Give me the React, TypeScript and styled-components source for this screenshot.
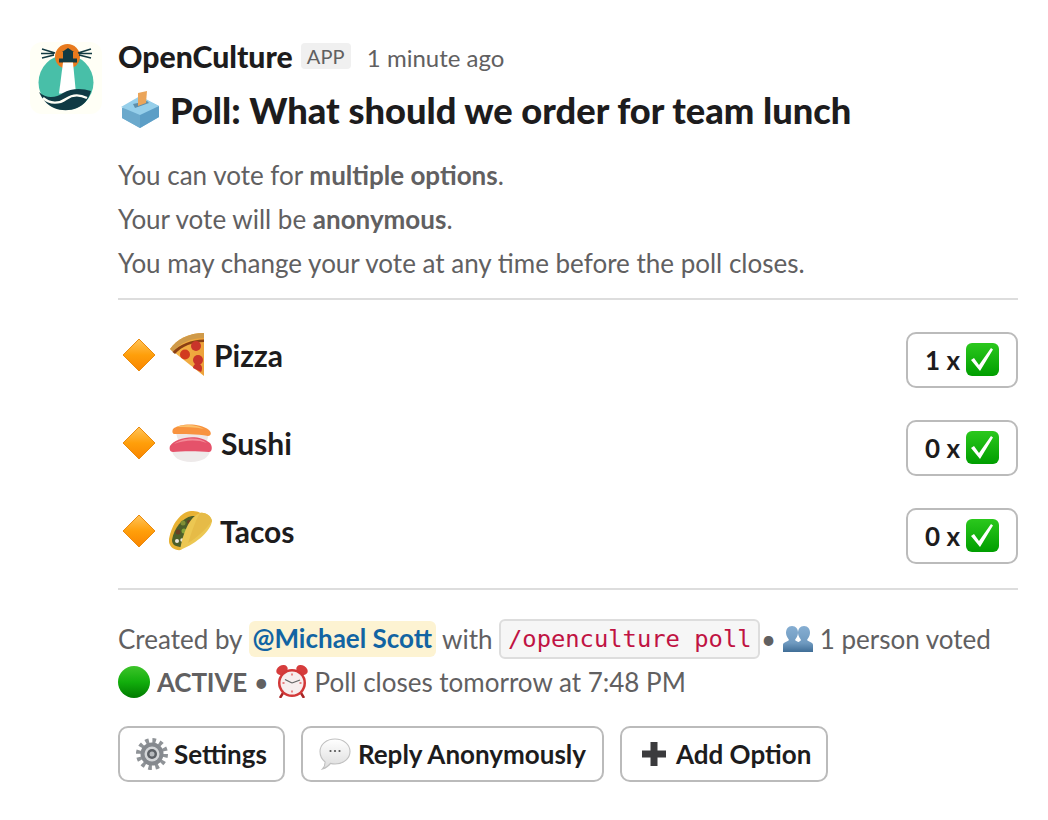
import React from "react";
import styled, { createGlobalStyle } from "styled-components";

const Global = createGlobalStyle`
  html, body { margin: 0; padding: 0; background: #fff; }
  body { font-family: Lato, "Noto Sans", sans-serif; color: #1d1c1d; }
`;

const Page = styled.div`
  display: flex;
  gap: 16px;
  width: 1048px;
  height: 820px;
  box-sizing: border-box;
  padding: 38px 30px 0 30px;
`;
const Avatar = styled.div`
  width: 72px;
  height: 72px;
  flex: none;
  margin-top: 4px;
  border-radius: 12px;
  background: #fffff6;
  display: flex;
`;
const Body = styled.div`
  width: 900px;
  display: flex;
  flex-direction: column;
`;
const Header = styled.div`
  display: flex;
  align-items: center;
  height: 36px;
`;
const Name = styled.span`
  font-size: 30.2px;
  font-weight: 900;
`;
const AppTag = styled.span`
  margin-left: 8px;
  padding: 0 6px;
  height: 26px;
  line-height: 26px;
  font-size: 20px;
  font-weight: 400;
  letter-spacing: 0.2px;
  color: #616061;
  background: #f0f0f0;
  border-radius: 4px;
`;
const Time = styled.span`
  margin-left: 16px;
  font-size: 24px;
  color: #616061;
  position: relative;
  top: 1px;
`;
const Title = styled.h1`
  display: flex;
  align-items: center;
  gap: 10px;
  margin: 14px 0 0 0;
  height: 44px;
  font-size: 36.25px;
  font-weight: 900;
  color: #1d1c1d;
`;
const TitleIcon = styled.span`
  display: flex;
  margin-left: 2px;
`;
const Intro = styled.div`
  margin-top: 21px;
  display: flex;
  flex-direction: column;
`;
const Line = styled.div`
  height: 44px;
  line-height: 44px;
  font-size: 26px;
  color: #616061;
  & b { font-weight: 700; }
`;
const Divider = styled.hr<{ $top: number }>`
  width: 100%;
  margin: ${(p) => p.$top}px 0 0 0;
  border: none;
  height: 2px;
  background: #dddddd;
`;
const Options = styled.div`
  margin-top: 32px;
  display: flex;
  flex-direction: column;
  gap: 32px;
`;
const Option = styled.div`
  display: flex;
  justify-content: space-between;
  align-items: center;
  height: 56px;
`;
const OptionLabel = styled.div`
  display: flex;
  align-items: center;
  font-size: 30px;
  font-weight: 700;
  position: relative;
  top: -5px;
  padding-left: 4px;
`;
const OptionIcon = styled.span`
  display: flex;
  margin-left: 13px;
  margin-right: 8px;
`;
const VoteButton = styled.div`
  box-sizing: border-box;
  width: 112px;
  height: 56px;
  border: 2px solid #bbbbbb;
  border-radius: 10px;
  display: flex;
  align-items: center;
  justify-content: center;
  gap: 6px;
  font-size: 26px;
  font-weight: 700;
  padding-bottom: 1px;
`;
const Context = styled.div`
  margin-top: 27px;
  display: flex;
  flex-direction: column;
`;
const ContextLine = styled.div`
  height: 43px;
  display: flex;
  align-items: center;
  font-size: 26px;
  color: #616061;
  white-space: pre;
  & b { font-weight: 700; letter-spacing: -0.15px; }
`;
const Mention = styled.span`
  background: #fdf3d2;
  color: #1264a3;
  font-weight: 700;
  border-radius: 6px;
  padding: 0 4px;
  margin: 0 6px 0 6px;
  height: 36px;
  line-height: 35px;
  box-sizing: border-box;
  display: inline-block;
  font-size: 26px;
`;
const Code = styled.code`
  font-family: "DejaVu Sans Mono", "Liberation Mono", monospace;
  font-size: 23.8px;
  color: #c01343;
  background: #f6f6f6;
  border: 2px solid #dddddd;
  border-radius: 6px;
  box-sizing: border-box;
  height: 40px;
  line-height: 36px;
  padding: 0 6.5px;
  margin: 0 1px 0 7px;
`;
const InlineIcon = styled.span`
  display: inline-flex;
  margin: 0 7px 0 0;
`;
const Actions = styled.div`
  margin-top: 23px;
  display: flex;
  gap: 16px;
`;
const ActionButton = styled.div`
  box-sizing: border-box;
  height: 56px;
  padding: 0 16px;
  border: 2px solid #bbbbbb;
  border-radius: 10px;
  display: flex;
  align-items: center;
  gap: 6px;
  font-size: 26px;
  font-weight: 700;
  color: #1d1c1d;
`;
const AddButton = styled(ActionButton)`
  padding: 0 15px 0 16px;
`;
const AddIcon = styled.span`
  display: flex;
  margin: 0 4px;
`;

const Logo = () => (
  <svg width="72" height="72" viewBox="0 0 72 72">
    <circle cx="36" cy="40.500" r="27.500" fill="#48bfa8" />
    <circle cx="37.500" cy="14.500" r="12.500" fill="#e87a1d" />
    <path d="M12 7l13 4M11 11.500h13M12 16l12-3M61 7l-13 4M62 11.500H49M61 16l-12-3" stroke="#123a42" strokeWidth="1.500" />
    <path d="M29 16.500h18v4H29z M33 10h10v6.500H33z M38 6l6 4H32z" fill="#123a42" />
    <path d="M33 20.500h10l3 31H29z" fill="#fff" />
    <path d="M9 50C16 57 26 56 33 51 41 46 52 46 61 49 59 57 54 63 47 66 40 69 31 69 24 66 17 63 12 57 9 50z" fill="#0f3a44" />
    <path d="M13 56C20 62 29 62 36 57 43 52 51 53 57 56" stroke="#fffff6" strokeWidth="2.400" fill="none" />
  </svg>
);
const Ballot = () => (
  <svg width="40" height="40" viewBox="0 0 40 40">
    <path d="M20 7l19 9v11L20 38 2 28V18z" fill="#7fb9da" />
    <path d="M20 21v17L2 28V18z" fill="#6ba9cc" />
    <path d="M20 21v17l19-11V16z" fill="#5c9ec6" />
    <path d="M20 6l19 10-19 9L1 17z" fill="#96cfea" />
    <path d="M13 14l14-3 2 2-14 5z" fill="#5f8ea8" />
    <path d="M18 3l9-2-1 12-8 3z" fill="#eba55a" />
  </svg>
);
const Diamond = () => (
  <svg width="34" height="34" viewBox="0 0 34 34">
    <defs>
      <linearGradient id="dm" x1="0" y1="0" x2="0" y2="1">
        <stop offset="0" stopColor="#ffc45a" />
        <stop offset="0.5" stopColor="#ff9f0a" />
        <stop offset="1" stopColor="#f98500" />
      </linearGradient>
    </defs>
    <path d="M17 1l16 16-16 16L1 17z" fill="url(#dm)" stroke="#e98a10" strokeWidth="1" strokeLinejoin="round" />
  </svg>
);
const Pizza = () => (
  <svg width="37" height="44" viewBox="0 0 37 44">
    <defs>
      <linearGradient id="pz" x1="0" y1="0" x2="1" y2="0">
        <stop offset="0" stopColor="#f4b548" />
        <stop offset="1" stopColor="#eda23a" />
      </linearGradient>
    </defs>
    <path d="M1 16C8 6 20 0 35 0v43z" fill="url(#pz)" />
    <path d="M1 16C8 6 20 0 35 0v5C22 5 11 10 4 19z" fill="#cf9a4a" />
    <path d="M3.500 19C11 11 22 7 35 6.500v2.500C24 9 13 13 6 21z" fill="#8a3f14" />
    <circle cx="27" cy="13" r="5" fill="#c9342a" />
    <circle cx="16" cy="21.500" r="5" fill="#d2391f" />
    <circle cx="29" cy="27" r="5" fill="#c9342a" />
    <path d="M24 35a4.500 4.500 0 0 1 9 0c0 2-.5 3-1 4z" fill="#c9342a" />
  </svg>
);
const Sushi = () => (
  <svg width="44" height="38" viewBox="0 0 44 38">
    <path d="M7 9h33l-2 8c-6 4-24 4-29-1z" fill="#efe6e4" />
    <path d="M4 5C12-1 30-1 40 6c3 3 2 6-1 6-11-2-25-2-33-2C3 10 3 7 4 5z" fill="#f8933f" />
    <path d="M7 3c8-3 20-3 28 2-9-2-19-2-28-2z" fill="#fbc26e" />
    <path d="M3 26h38c0 7-8 12-19 12S3 33 3 26z" fill="#eeeaea" />
    <path d="M1 22C6 13 30 9 41 19c3 4 2 9-1 9-10-1-28-1-36 0-3 0-4-3-3-6z" fill="#e5526a" />
    <path d="M5 20c8-6 24-8 33-1-10-4-23-3-33 1z" fill="#f28a97" />
  </svg>
);
const Taco = () => (
  <svg width="43" height="40" viewBox="0 0 43 40">
    <path d="M0 28C3 12 12 1 22 0c6 0 9 1 10 3L12 39C5 40-1 35 0 28z" fill="#e8b233" />
    <path d="M3 29C5 17 13 7 23 5l5 0-15 31C7 36 3 34 3 29z" fill="#4d5f2a" />
    <circle cx="14" cy="12" r="2.500" fill="#7f8f35" />
    <circle cx="9" cy="21" r="2.500" fill="#6a3f22" />
    <circle cx="15" cy="20" r="2.500" fill="#86a33a" />
    <circle cx="8" cy="30" r="2" fill="#ece8dc" />
    <circle cx="13" cy="29" r="1.700" fill="#ece8dc" />
    <circle cx="20" cy="11" r="2" fill="#6a3f22" />
    <path d="M11 39C14 22 20 6 31 2c6-1 11 3 12 8-1 9-14 22-32 29z" fill="#ecc752" />
    <path d="M31 2c6-1 11 3 12 8-6 8-14 16-24 22 3-9 7-22 12-30z" fill="#e6bb47" />
  </svg>
);
const Check = () => (
  <svg width="33" height="33" viewBox="0 0 33 33">
    <defs>
      <linearGradient id="ck" x1="0" y1="0" x2="0" y2="1">
        <stop offset="0" stopColor="#2bc81d" />
        <stop offset="1" stopColor="#009e00" />
      </linearGradient>
    </defs>
    <rect width="33" height="33" rx="6" fill="url(#ck)" />
    <path d="M5 17l3-2 5 7L25 5l2 1.500L14 28z" fill="#fff" />
  </svg>
);
const GreenDot = () => (
  <svg width="32" height="32" viewBox="0 0 32 32">
    <defs>
      <linearGradient id="gd" x1="0" y1="0" x2="0" y2="1">
        <stop offset="0" stopColor="#3dc42a" />
        <stop offset="0.5" stopColor="#12ae0c" />
        <stop offset="1" stopColor="#007a00" />
      </linearGradient>
    </defs>
    <circle cx="16" cy="16" r="16" fill="url(#gd)" />
  </svg>
);
const Clock = () => (
  <svg width="32" height="33" viewBox="0 0 32 33">
    <ellipse cx="6" cy="5" rx="6" ry="4.500" fill="#d63c3c" transform="rotate(-30 6 5)" />
    <ellipse cx="26" cy="5" rx="6" ry="4.500" fill="#d63c3c" transform="rotate(30 26 5)" />
    <path d="M7 28l-3 5M25 28l3 5" stroke="#a82626" strokeWidth="2.500" />
    <circle cx="16" cy="18" r="14" fill="#d23838" />
    <circle cx="16" cy="18" r="11.500" fill="#f7eeee" />
    <path d="M16 8.500v2M16 25.500v2M6.500 18h2M23.500 18h2" stroke="#e25b5b" strokeWidth="1.400" />
    <path d="M16 18L9 14.500M16 18l8-3" stroke="#666" strokeWidth="1.300" />
  </svg>
);
const Gear = () => (
  <svg width="32" height="32" viewBox="0 0 32 32">
    <circle cx="16" cy="16" r="13.500" fill="none" stroke="#8f9397" strokeWidth="5" strokeDasharray="3.500 3.570" />
    <circle cx="16" cy="16" r="11.500" fill="#85898e" />
    <circle cx="16" cy="16" r="7.500" fill="#d4d6d8" />
    <circle cx="16" cy="16" r="5" fill="#5d6166" />
    <circle cx="16" cy="16" r="2.500" fill="#b7babd" />
  </svg>
);
const Bubble = () => (
  <svg width="33" height="32" viewBox="0 0 33 32">
    <defs>
      <linearGradient id="bu" x1="0" y1="0" x2="0" y2="1">
        <stop offset="0" stopColor="#fff" />
        <stop offset="1" stopColor="#dcdcdc" />
      </linearGradient>
    </defs>
    <path d="M16 1c8.500 0 15 5.500 15 12.500S24.500 26 16 26c-1.600 0-3-.2-4.500-.6C10 27.500 7 30 3.500 31c2-2 2.600-4.500 2.600-7C3 21.500 1 18 1 13.500 1 6.500 7.500 1 16 1z" fill="url(#bu)" stroke="#c0c0c0" strokeWidth="1.100" />
    <circle cx="11.500" cy="13" r="1.100" fill="#555" />
    <circle cx="16" cy="13" r="1.100" fill="#555" />
    <circle cx="20.500" cy="13" r="1.100" fill="#555" />
  </svg>
);
const Busts = () => (
  <svg width="30" height="26" viewBox="0 0 30 26">
    <defs>
      <linearGradient id="bs" x1="0" y1="0" x2="0" y2="1">
        <stop offset="0" stopColor="#86aed2" />
        <stop offset="0.65" stopColor="#6f9ac0" />
        <stop offset="1" stopColor="#3f6d96" />
      </linearGradient>
    </defs>
    <path d="M21 0c4 0 6 3 6 7 0 3-2 5-3 7 2 2 6 2 6 5v7H13v-7c0-3 4-3 5-5-1-2-3-4-3-7 0-4 2-7 6-7z" fill="url(#bs)" />
    <path d="M9 0c4 0 6 3 6 7 0 3-2 5-3 7 2 2 6 2 6 5v7H0v-7c0-3 4-3 6-5-1-2-3-4-3-7 0-4 2-7 6-7z" fill="url(#bs)" />
  </svg>
);
const Plus = () => (
  <svg width="24" height="24" viewBox="0 0 24 24">
    <path d="M8.500 0h7v8.500H24v7h-8.500V24h-7v-8.500H0v-7h8.500z" fill="#3b3b3d" />
  </svg>
);

const options: { label: string; icon: React.ReactNode; votes: number }[] = [
  { label: "Pizza", icon: <Pizza />, votes: 1 },
  { label: "Sushi", icon: <Sushi />, votes: 0 },
  { label: "Tacos", icon: <Taco />, votes: 0 },
];

export default function App() {
  return (
    <>
      <Global />
      <Page>
        <Avatar><Logo /></Avatar>
        <Body>
          <Header>
            <Name>OpenCulture</Name>
            <AppTag>APP</AppTag>
            <Time>1 minute ago</Time>
          </Header>
          <Title><TitleIcon><Ballot /></TitleIcon>Poll: What should we order for team lunch</Title>
          <Intro>
            <Line>You can vote for <b>multiple options</b>.</Line>
            <Line>Your vote will be <b>anonymous</b>.</Line>
            <Line>You may change your vote at any time before the poll closes.</Line>
          </Intro>
          <Divider $top={13} />
          <Options>
            {options.map((o) => (
              <Option key={o.label}>
                <OptionLabel>
                  <Diamond />
                  <OptionIcon>{o.icon}</OptionIcon>
                  {o.label}
                </OptionLabel>
                <VoteButton>{o.votes} x <Check /></VoteButton>
              </Option>
            ))}
          </Options>
          <Divider $top={24} />
          <Context>
            <ContextLine>
              Created by<Mention>@Michael Scott</Mention>with<Code>/openculture poll</Code>• <InlineIcon><Busts /></InlineIcon>1 person voted
            </ContextLine>
            <ContextLine>
              <InlineIcon><GreenDot /></InlineIcon><b>ACTIVE</b> • <InlineIcon><Clock /></InlineIcon>Poll closes tomorrow at 7:48 PM
            </ContextLine>
          </Context>
          <Actions>
            <ActionButton><Gear />Settings</ActionButton>
            <ActionButton><Bubble />Reply Anonymously</ActionButton>
            <AddButton><AddIcon><Plus /></AddIcon>Add Option</AddButton>
          </Actions>
        </Body>
      </Page>
    </>
  );
}
